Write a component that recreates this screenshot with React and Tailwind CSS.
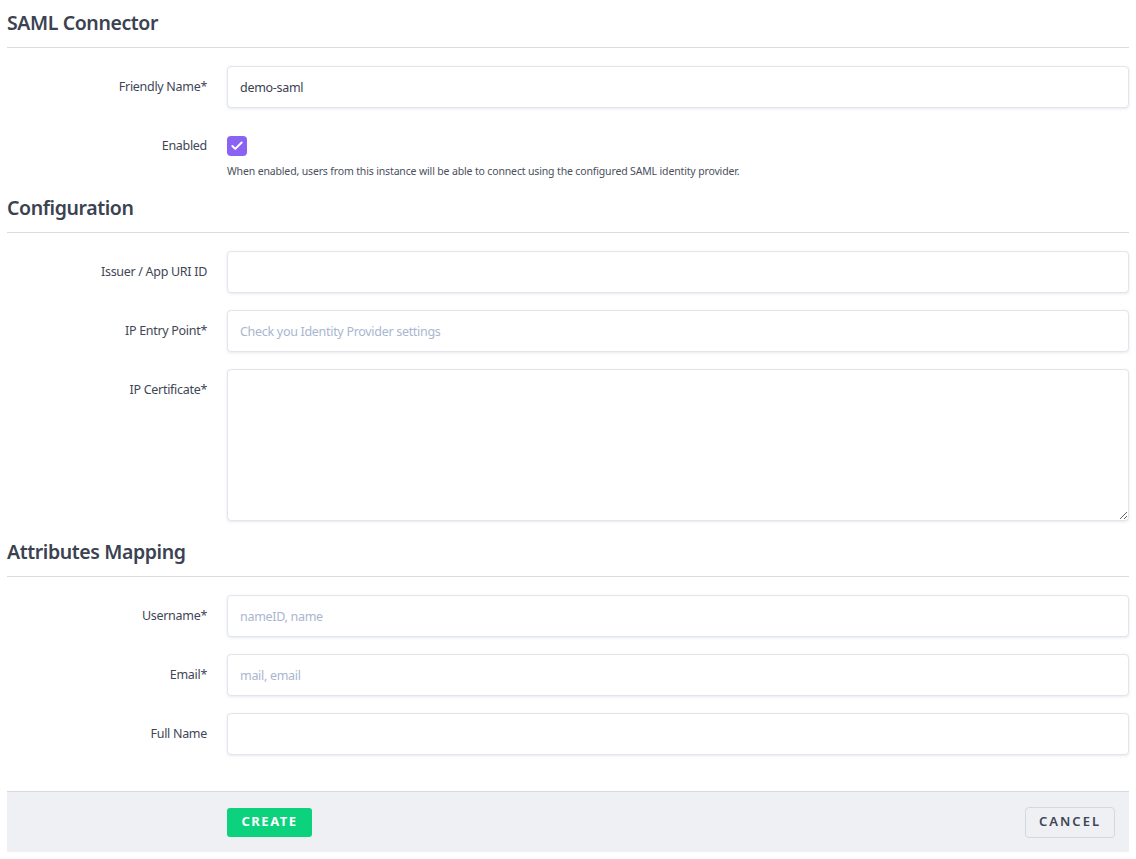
import { Check } from "lucide-react";

const font = { fontFamily: '"Noto Sans", "Open Sans", sans-serif' };

function SectionTitle({ children, className = "" }) {
  return (
    <h2
      className={
        "border-b border-[#d9dbe3] pb-[12px] text-[19.5px] leading-[24px] font-semibold tracking-[-0.4px] text-[#3b4252] " +
        className
      }
    >
      {children}
    </h2>
  );
}

function Row({ label, children }) {
  return (
    <div className="flex items-start gap-[20px]">
      <label className="w-[200px] shrink-0 text-right text-[12.5px] leading-[42px] font-normal tracking-[-0.3px] text-[#3f4656]">
        {label}
      </label>
      <div className="flex-1">{children}</div>
    </div>
  );
}

function Input({ value, placeholder }) {
  return (
    <input
      type="text"
      defaultValue={value}
      placeholder={placeholder}
      className="h-[42px] w-full rounded-[4px] border border-[#e3e5ec] bg-white px-[12px] text-[12.5px] tracking-[-0.3px] text-[#3b4151] shadow-[0_1px_3px_rgba(60,70,110,0.12)] outline-none placeholder:text-[#a9b6cf]"
    />
  );
}

export default function App() {
  return (
    <div className="min-h-[859px] bg-white px-[7px] pt-[11px]" style={font}>
      <SectionTitle>SAML Connector</SectionTitle>
      <div className="mt-[18px] flex flex-col gap-[17px]">
        <Row label="Friendly Name*">
          <Input value="demo-saml" />
        </Row>
        <Row label="Enabled">
          <div className="pt-[11px]">
            <div className="flex h-[20px] w-[20px] items-center justify-center rounded-[4px] bg-[#8b63f2]">
              <Check size={14} strokeWidth={3.4} color="white" />
            </div>
            <p className="mt-[7px] text-[10.5px] leading-[16px] tracking-[-0.15px] text-[#4a5060]">
              When enabled, users from this instance will be able to connect using the configured SAML identity provider.
            </p>
          </div>
        </Row>
      </div>

      <SectionTitle className="mt-[17px]">Configuration</SectionTitle>
      <div className="mt-[18px] flex flex-col gap-[17px]">
        <Row label="Issuer / App URI ID">
          <Input />
        </Row>
        <Row label="IP Entry Point*">
          <Input placeholder="Check you Identity Provider settings" />
        </Row>
        <Row label="IP Certificate*">
          <textarea className="block h-[152px] w-full rounded-[4px] border border-[#e3e5ec] bg-white px-[12px] py-[10px] text-[12.5px] text-[#3b4151] shadow-[0_1px_3px_rgba(60,70,110,0.12)] outline-none" />
        </Row>
      </div>

      <SectionTitle className="mt-[19px]">Attributes Mapping</SectionTitle>
      <div className="mt-[18px] flex flex-col gap-[17px]">
        <Row label="Username*">
          <Input placeholder="nameID, name" />
        </Row>
        <Row label="Email*">
          <Input placeholder="mail, email" />
        </Row>
        <Row label="Full Name">
          <Input />
        </Row>
      </div>

      <div className="mt-[36px] flex h-[61px] items-center justify-between border-t border-[#d8dae1] bg-[#eef0f4] pr-[14px] pl-[220px]">
        <button className="h-[29px] w-[85px] rounded-[3px] bg-[#0cd27e] text-[13px] font-bold tracking-[1.5px] text-white">
          CREATE
        </button>
        <button className="h-[31px] w-[90px] rounded-[4px] border border-[#d5d8df] text-[13px] font-semibold tracking-[2px] text-[#3e4555]">
          CANCEL
        </button>
      </div>
    </div>
  );
}
